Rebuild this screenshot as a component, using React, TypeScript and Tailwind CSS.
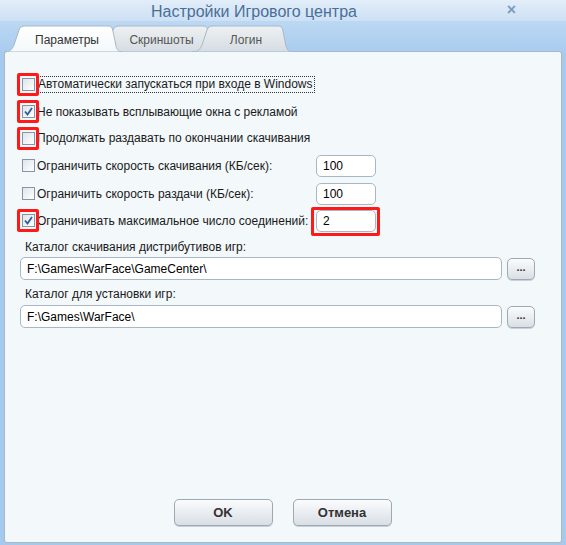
import React from "react";

const Tab = ({ label, active, w }: { label: string; active?: boolean; w: number }) => {
  const fill = active ? "url(#tabA)" : "url(#tabI)";
  return (
    <div className={`relative flex items-center justify-center h-[27px] ${active ? "z-10 text-[#333]" : "text-[#555]"}`} style={{ width: w }}>
      <svg className="absolute inset-0" width={w} height={27} viewBox={`0 0 ${w} 27`}>
        <defs>
          <linearGradient id="tabA" x1="0" y1="0" x2="0" y2="1">
            <stop offset="0" stopColor="#ffffff" />
            <stop offset="1" stopColor="#f3f8fa" />
          </linearGradient>
          <linearGradient id="tabI" x1="0" y1="0" x2="0" y2="1">
            <stop offset="0" stopColor="#eef1f3" />
            <stop offset="1" stopColor="#d5dce2" />
          </linearGradient>
        </defs>
        <path
          d={`M0 27 C5 27 8 25 10 20 L15 5 C16 2 18 1 21 1 L${w - 14} 1 C${w - 12} 1 ${w - 10} 2 ${w - 9.5} 4 L${w - 6} 21 C${w - 5} 25 ${w - 3} 27 ${w} 27 Z`}
          fill={fill}
          stroke="#a9b8c6"
          strokeWidth="1"
        />
      </svg>
      <span className="relative text-[12px] ml-[8px] mt-[2px]">{label}</span>
    </div>
  );
};

const Check = ({ checked, red }: { checked?: boolean; red?: boolean }) => (
  <span className="relative inline-flex w-[13px] h-[13px] shrink-0">
    <span className="w-[13px] h-[13px] border border-[#8596a8] bg-gradient-to-br from-[#dfe5ea] to-[#ffffff] flex items-center justify-center">
      {checked && (
        <svg width="9" height="9" viewBox="0 0 9 9">
          <path d="M1 4.5 L3.5 7.5 L8 1" fill="none" stroke="#2b5d9c" strokeWidth="1.8" />
        </svg>
      )}
    </span>
    {red && <span className="absolute -left-[5px] -top-[5px] w-[22px] h-[23px] border-[3px] border-[#ff1a1a] rounded-[2px]" />}
  </span>
);

const Input = ({ value, className, red }: { value: string; className: string; red?: boolean }) => (
  <div className={`relative ${className}`}>
    <div className="h-full bg-white border border-[#a9b7c5] rounded-[5px] flex items-center px-[6px] text-[12px] text-black">{value}</div>
    {red && <span className="absolute -left-[5px] -top-[3px] -right-[4px] -bottom-[4px] border-[3px] border-[#ff1a1a] rounded-[2px]" />}
  </div>
);

const Btn = ({ children, className }: { children: React.ReactNode; className: string }) => (
  <div className={`flex items-center justify-center rounded-[5px] border border-[#9ea9b4] bg-gradient-to-b from-[#fbfcfd] to-[#d9dfe5] shadow-[0_1px_0_#c8d0d8] ${className}`}>
    {children}
  </div>
);

export default function App() {
  return (
    <div className="w-[566px] h-[545px] flex flex-col bg-[#a6caee] font-['Liberation_Sans',Arial,sans-serif] overflow-hidden">
      <div className="relative h-[21px] bg-gradient-to-b from-[#e2eef9] to-[#cde0f4] flex items-center justify-center pr-[58px]">
        <span className="text-[16px] text-[#4a6f97] leading-none mt-[2px]">Настройки Игрового центра</span>
        <span className="absolute right-[50px] top-[2px] text-[16px] text-[#7a9cc0] font-bold leading-none">×</span>
      </div>
      <div className="h-[31px] bg-gradient-to-b from-[#bcd8f3] to-[#a9ccef] flex items-end pl-[4px]">
        <Tab label="Параметры" active w={118} />
        <div className="-ml-[24px] flex">
          <Tab label="Скриншоты" w={119} />
        </div>
        <div className="-ml-[25px] flex">
          <Tab label="Логин" w={100} />
        </div>
      </div>
      <div className="flex-1 ml-[4px] mr-[4px] mb-[2px] -mt-[1px] bg-[#f3f8fa] border border-[#a9b8c6] rounded-[3px] flex flex-col text-[12px] text-[#1a1a1a] whitespace-nowrap">
        <div className="pt-[19px] pl-[17px] pr-[26px] flex flex-col">
          <div className="h-[27px] flex items-center">
            <Check red />
            <span className="ml-[1px] border border-dotted border-[#333] px-[1px] leading-[15px]">Автоматически запускаться при входе в Windows</span>
          </div>
          <div className="h-[27px] flex items-center">
            <Check checked red />
            <span className="ml-[2px]">Не показывать всплывающие окна с рекламой</span>
          </div>
          <div className="h-[26px] flex items-center">
            <Check red />
            <span className="ml-[2px]">Продолжать раздавать по окончании скачивания</span>
          </div>
          <div className="h-[29px] flex items-center">
            <Check />
            <span className="ml-[2px] w-[279px]">Ограничить скорость скачивания (КБ/сек):</span>
            <Input value="100" className="w-[60px] h-[22px]" />
          </div>
          <div className="h-[27px] flex items-center">
            <Check />
            <span className="ml-[2px] w-[279px]">Ограничить скорость раздачи (КБ/сек):</span>
            <Input value="100" className="w-[60px] h-[22px]" />
          </div>
          <div className="h-[27px] flex items-center">
            <Check checked red />
            <span className="ml-[2px] w-[279px]">Ограничивать максимальное число соединений:</span>
            <Input value="2" className="w-[60px] h-[22px]" red />
          </div>
          <div className="mt-[5px] pl-[3px] leading-[16px]">Каталог скачивания дистрибутивов игр:</div>
          <div className="mt-[2px] -ml-[2px] flex items-center gap-[5px]">
            <Input value="F:\Games\WarFace\GameCenter\" className="flex-1 h-[23px]" />
            <Btn className="w-[28px] h-[22px] text-[11px] text-[#333] font-bold pb-[3px]">...</Btn>
          </div>
          <div className="mt-[6px] pl-[3px] leading-[16px]">Каталог для установки игр:</div>
          <div className="mt-[3px] -ml-[2px] flex items-center gap-[5px]">
            <Input value="F:\Games\WarFace\" className="flex-1 h-[23px]" />
            <Btn className="w-[28px] h-[22px] text-[11px] text-[#333] font-bold pb-[3px]">...</Btn>
          </div>
        </div>
        <div className="mt-auto mb-[16px] flex justify-center gap-[20px] pr-[1px]">
          <Btn className="w-[99px] h-[27px] text-[13px] font-bold text-[#333]">OK</Btn>
          <Btn className="w-[99px] h-[27px] text-[13px] font-bold text-[#333]">Отмена</Btn>
        </div>
      </div>
    </div>
  );
}
